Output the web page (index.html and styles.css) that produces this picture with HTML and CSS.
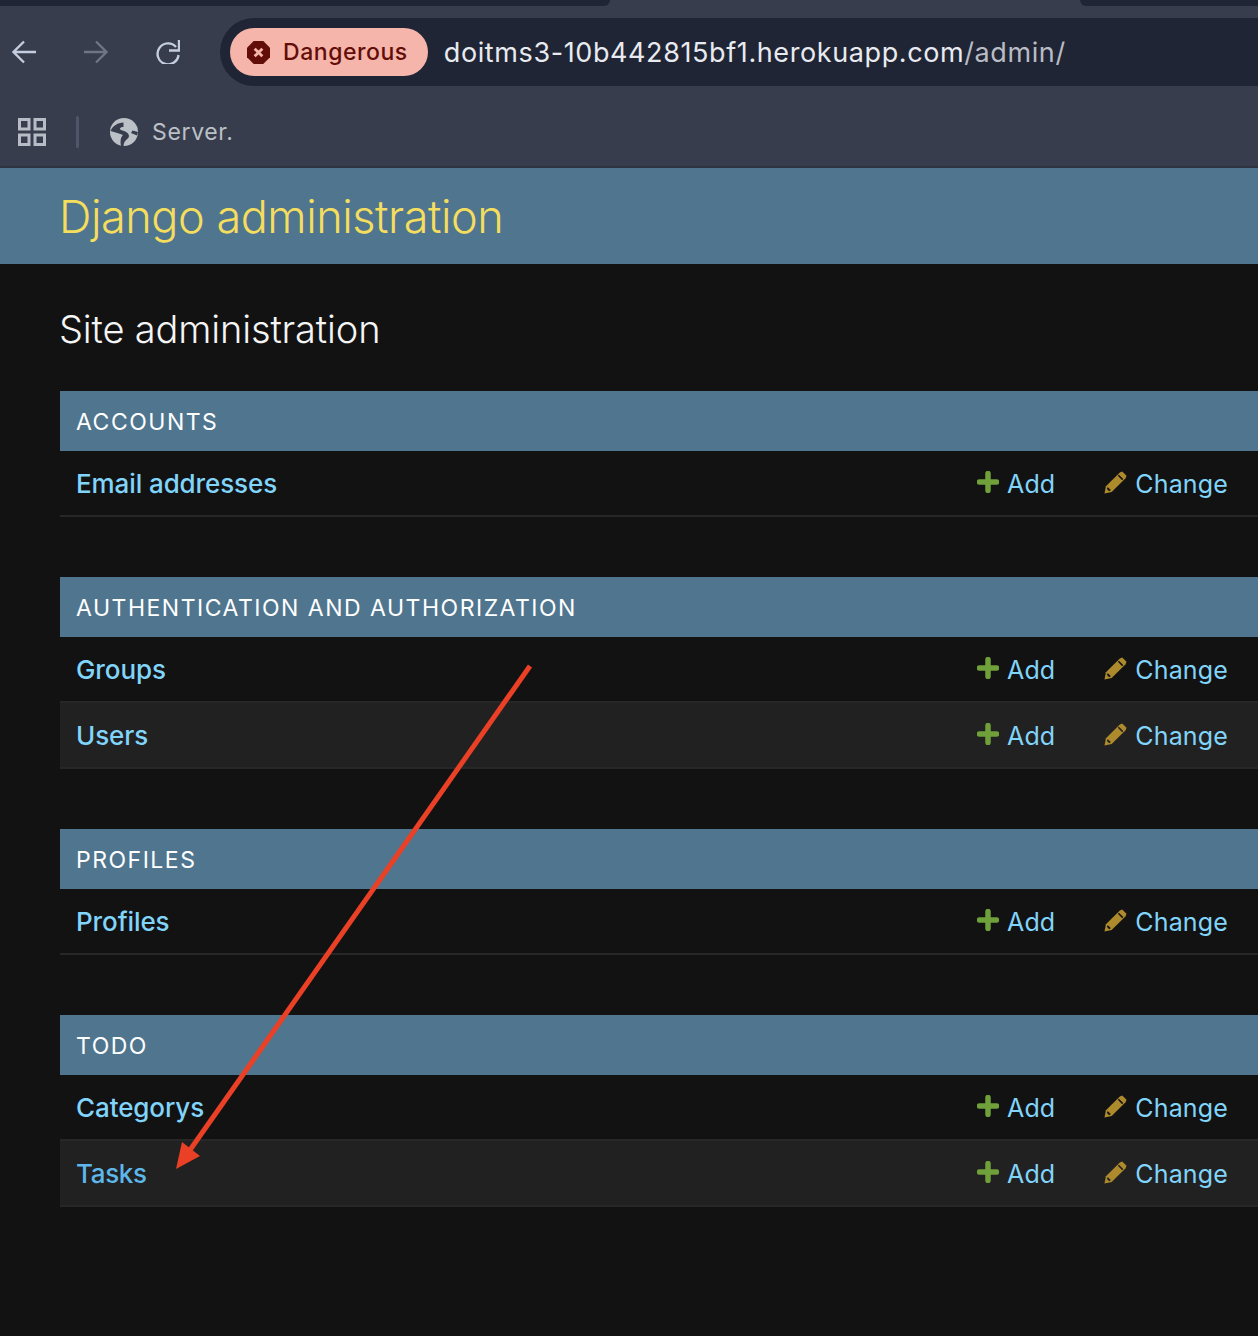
FILE: index.html
```html
<!DOCTYPE html>
<html>
<head>
	<title>Site administration</title>
	<meta charset="UTF-8">
	<link rel="stylesheet" href="styles.css">
</head>
<body>
	<div class="chrome">
		<div class="tabstrip">
			<div class="tab-dark tab-left"></div>
			<div class="tab-dark tab-right"></div>
		</div>
		<div class="toolbar">
			<svg class="nav-icon" viewBox="0 0 24 24"><path d="M24 12H2M12 1.500L1.500 12 12 22.500" fill="none" stroke="#c3cde0" stroke-width="2.300"/></svg>
			<svg class="nav-icon nav-off" viewBox="0 0 24 24"><path d="M0 12h22M12 1.500L22.500 12 12 22.500" fill="none" stroke="#6f7582" stroke-width="2.300"/></svg>
			<svg class="nav-icon nav-reload" viewBox="0 0 24 24"><path d="M22.500 15A10.500 10.500 0 1 1 20 7" fill="none" stroke="#c3cde0" stroke-width="2.400"/><path d="M23 0V10.500H13" fill="none" stroke="#c3cde0" stroke-width="2.400"/></svg>
			<div class="omnibox">
				<span class="danger-chip">
					<svg class="danger-icon" viewBox="0 0 24 24"><path d="M7 0h10l7 7v10l-7 7H7l-7-7V7z" fill="#630d08"/><path d="M8 8l8 8M16 8l-8 8" stroke="#f6b5ab" stroke-width="3"/></svg>
					Dangerous
				</span>
				<span class="url">doitms3-10b442815bf1.herokuapp.com<span class="url-path">/admin/</span></span>
			</div>
		</div>
		<div class="bookmarks">
			<svg class="apps-icon" viewBox="0 0 28 28"><path d="M1.500 1.500h9.500v9.500H1.500zM17 1.500h9.500v9.500H17zM1.500 17h9.500v9.500H1.500zM17 17h9.500v9.500H17z" fill="none" stroke="#b8bcc4" stroke-width="3"/></svg>
			<span class="bm-sep"></span>
			<svg class="globe-icon" viewBox="0 0 28 28"><circle cx="14" cy="14" r="14" fill="#bcc0c7"/><path d="M0.500 13C2.500 8 8 4.500 13.500 4.500L13.500 9C10 9 9 11 11 12C15 13 19 15 19 18C19 21 14 21.500 13.500 28L11 28C10 22 11 19 13 17C10 16 5 14 0.500 13zM28 14L22.500 12.500L21 15L27 17.500z" fill="#373d4c"/></svg>
			<span class="bm-label">Server.</span>
		</div>
	</div>

	<header class="site-header">
		<h1>Django administration</h1>
	</header>

	<main class="content">
		<h2 class="page-title">Site administration</h2>

		<section class="app-module">
			<h3 class="caption">Accounts</h3>
			<div class="model-row">
				<a class="model-name">Email addresses</a>
				<span class="model-actions">
					<a class="action"><svg class="ico-add" viewBox="0 0 22 22"><path d="M11 2.500v17M2.500 11h17" stroke="#70a03a" stroke-width="5.500" stroke-linecap="round"/></svg>Add</a>
					<a class="action"><svg class="ico-edit" viewBox="0 0 24 24"><path d="M0.500 23.500L2 16 16.500 1.500 19 0.500 23.500 5 22.500 7.500 8 22z" fill="#ad8a2c"/><path d="M15 4.500l4.500 4.500M3.500 17.500l3 3M4 20l1-1" stroke="#121212" stroke-width="1.600"/></svg>Change</a>
				</span>
			</div>
		</section>

		<section class="app-module">
			<h3 class="caption">Authentication and Authorization</h3>
			<div class="model-row">
				<a class="model-name">Groups</a>
				<span class="model-actions">
					<a class="action"><svg class="ico-add" viewBox="0 0 22 22"><path d="M11 2.500v17M2.500 11h17" stroke="#70a03a" stroke-width="5.500" stroke-linecap="round"/></svg>Add</a>
					<a class="action"><svg class="ico-edit" viewBox="0 0 24 24"><path d="M0.500 23.500L2 16 16.500 1.500 19 0.500 23.500 5 22.500 7.500 8 22z" fill="#ad8a2c"/><path d="M15 4.500l4.500 4.500M3.500 17.500l3 3M4 20l1-1" stroke="#121212" stroke-width="1.600"/></svg>Change</a>
				</span>
			</div>
			<div class="model-row row-alt">
				<a class="model-name">Users</a>
				<span class="model-actions">
					<a class="action"><svg class="ico-add" viewBox="0 0 22 22"><path d="M11 2.500v17M2.500 11h17" stroke="#70a03a" stroke-width="5.500" stroke-linecap="round"/></svg>Add</a>
					<a class="action"><svg class="ico-edit" viewBox="0 0 24 24"><path d="M0.500 23.500L2 16 16.500 1.500 19 0.500 23.500 5 22.500 7.500 8 22z" fill="#ad8a2c"/><path d="M15 4.500l4.500 4.500M3.500 17.500l3 3M4 20l1-1" stroke="#212121" stroke-width="1.600"/></svg>Change</a>
				</span>
			</div>
		</section>

		<section class="app-module">
			<h3 class="caption">Profiles</h3>
			<div class="model-row">
				<a class="model-name">Profiles</a>
				<span class="model-actions">
					<a class="action"><svg class="ico-add" viewBox="0 0 22 22"><path d="M11 2.500v17M2.500 11h17" stroke="#70a03a" stroke-width="5.500" stroke-linecap="round"/></svg>Add</a>
					<a class="action"><svg class="ico-edit" viewBox="0 0 24 24"><path d="M0.500 23.500L2 16 16.500 1.500 19 0.500 23.500 5 22.500 7.500 8 22z" fill="#ad8a2c"/><path d="M15 4.500l4.500 4.500M3.500 17.500l3 3M4 20l1-1" stroke="#121212" stroke-width="1.600"/></svg>Change</a>
				</span>
			</div>
		</section>

		<section class="app-module">
			<h3 class="caption">Todo</h3>
			<div class="model-row">
				<a class="model-name">Categorys</a>
				<span class="model-actions">
					<a class="action"><svg class="ico-add" viewBox="0 0 22 22"><path d="M11 2.500v17M2.500 11h17" stroke="#70a03a" stroke-width="5.500" stroke-linecap="round"/></svg>Add</a>
					<a class="action"><svg class="ico-edit" viewBox="0 0 24 24"><path d="M0.500 23.500L2 16 16.500 1.500 19 0.500 23.500 5 22.500 7.500 8 22z" fill="#ad8a2c"/><path d="M15 4.500l4.500 4.500M3.500 17.500l3 3M4 20l1-1" stroke="#121212" stroke-width="1.600"/></svg>Change</a>
				</span>
			</div>
			<div class="model-row row-alt">
				<a class="model-name name-visited">Tasks</a>
				<span class="model-actions">
					<a class="action"><svg class="ico-add" viewBox="0 0 22 22"><path d="M11 2.500v17M2.500 11h17" stroke="#70a03a" stroke-width="5.500" stroke-linecap="round"/></svg>Add</a>
					<a class="action"><svg class="ico-edit" viewBox="0 0 24 24"><path d="M0.500 23.500L2 16 16.500 1.500 19 0.500 23.500 5 22.500 7.500 8 22z" fill="#ad8a2c"/><path d="M15 4.500l4.500 4.500M3.500 17.500l3 3M4 20l1-1" stroke="#212121" stroke-width="1.600"/></svg>Change</a>
				</span>
			</div>
		</section>
	</main>

	<svg class="annotation" viewBox="0 0 1258 1336">
		<path d="M530 666L190 1150" stroke="#ea4026" stroke-width="5"/>
		<path d="M176 1169L182 1142 200 1156z" fill="#ea4026"/>
	</svg>
</body>
</html>
```

FILE: styles.css
```css
html, body {
	margin: 0;
	padding: 0;
}
body {
	position: relative;
	width: 1258px;
	height: 1336px;
	overflow: hidden;
	background-color: #121212;
	font-family: Inter, "Liberation Sans", sans-serif;
}

/* browser chrome */
.chrome {
	background-color: #373d4c;
	height: 166px;
	border-bottom: 2px solid #2f3340;
}
.tabstrip {
	display: flex;
	justify-content: space-between;
	height: 18px;
}
.tab-dark {
	height: 6px;
	background-color: #1f2534;
}
.tab-left {
	width: 610px;
	border-bottom-right-radius: 14px;
}
.tab-right {
	width: 178px;
	border-bottom-left-radius: 14px;
}
.toolbar {
	display: flex;
	align-items: center;
	height: 68px;
	padding-left: 12px;
}
.nav-icon {
	width: 24px;
	height: 24px;
	margin-right: 48px;
}
.nav-reload {
	margin-right: 40px;
}
.omnibox {
	flex: 1;
	display: flex;
	align-items: center;
	height: 68px;
	padding-left: 10px;
	background-color: #1f2534;
	border-radius: 34px 0 0 34px;
}
.danger-chip {
	display: flex;
	align-items: center;
	gap: 13px;
	height: 48px;
	padding: 0 20px 0 17px;
	background-color: #f6b5ab;
	border-radius: 24px;
	color: #630d08;
	font-size: 23px;
	font-weight: 500;
	letter-spacing: 0.55px;
}
.danger-icon {
	width: 23px;
	height: 23px;
}
.url {
	margin-left: 16px;
	color: #e8eaf0;
	font-size: 27px;
	letter-spacing: 0.6px;
}
.url-path {
	color: #b9bcc4;
}
.bookmarks {
	display: flex;
	align-items: center;
	box-sizing: border-box;
	height: 80px;
	padding: 12px 0 0 18px;
}
.apps-icon {
	width: 28px;
	height: 28px;
}
.bm-sep {
	width: 3px;
	height: 32px;
	margin: 0 31px 0 30px;
	background-color: #50566a;
	border-radius: 2px;
}
.globe-icon {
	width: 28px;
	height: 28px;
	margin-right: 14px;
}
.bm-label {
	color: #bcc0c7;
	font-size: 23px;
	letter-spacing: 0.65px;
}

/* django header */
.site-header {
	height: 96px;
	display: flex;
	align-items: center;
	padding-left: 59px;
	background-color: #50768f;
}
h1 {
	margin: 0;
	color: #f5dd5d;
	font-size: 45px;
	font-weight: 300;
	letter-spacing: -0.45px;
}

.content {
	padding: 40px 0 0 60px;
}
.page-title {
	margin: 0 0 36px -1px;
	height: 51px;
	line-height: 51px;
	color: #f5f5f5;
	font-size: 38px;
	font-weight: 300;
	letter-spacing: -0.15px;
}
.app-module {
	margin-bottom: 60px;
}
.caption {
	margin: 0;
	height: 60px;
	line-height: 62px;
	padding-left: 16px;
	background-color: #50768f;
	color: #fff;
	font-size: 23px;
	font-weight: 400;
	letter-spacing: 1.5px;
	text-transform: uppercase;
}
.model-row {
	display: flex;
	justify-content: space-between;
	align-items: center;
	box-sizing: border-box;
	height: 66px;
	padding: 0 30px 0 16px;
	border-bottom: 2px solid #272727;
	font-size: 26px;
}
.row-alt {
	background-color: #212121;
}
.model-name {
	color: #81d4fa;
	font-weight: 500;
	letter-spacing: -0.1px;
}
.name-visited {
	color: #5eb7ea;
	letter-spacing: -0.35px;
}
.model-actions {
	display: flex;
	gap: 49px;
	padding-top: 2px;
	font-size: 25px;
	letter-spacing: 0.15px;
}
.action {
	display: flex;
	align-items: center;
	color: #81d4fa;
}
.ico-add {
	width: 22px;
	height: 22px;
	margin: -4px 8px 0 0;
}
.ico-edit {
	width: 23px;
	height: 23px;
	margin: -4px 8px 0 0;
}

/* arrow drawn on top of the screenshot */
.annotation {
	position: absolute;
	left: 0;
	top: 0;
	width: 1258px;
	height: 1336px;
	pointer-events: none;
}
```
